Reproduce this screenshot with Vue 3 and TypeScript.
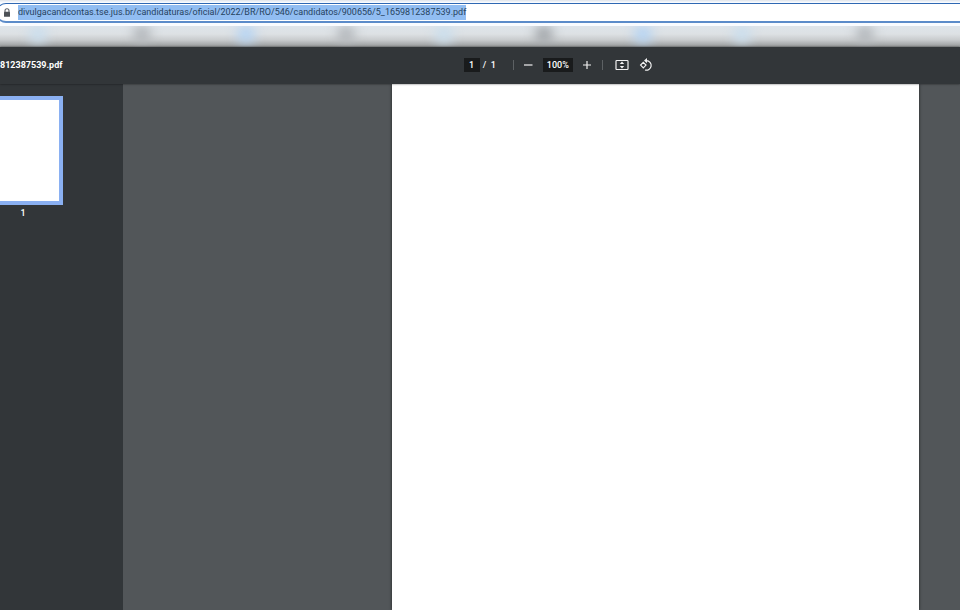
<script setup lang="ts">
import { onMounted, ref } from 'vue'

interface Bookmark {
  tone: 'grey' | 'blue' | 'cyan' | 'dark'
  left: number
}

const url = ref('divulgacandcontas.tse.jus.br/candidaturas/oficial/2022/BR/RO/546/candidatos/900656/5_1659812387539.pdf')
const fileName = '812387539.pdf'
const page = ref('1')
const zoom = ref('100%')
const address = ref<HTMLInputElement | null>(null)

// Horizontal centres of the blurred bookmarks, in percent of the bar.
const bookmarks: Bookmark[] = [
  { tone: 'cyan', left: 4 },
  { tone: 'grey', left: 14.8 },
  { tone: 'blue', left: 25.6 },
  { tone: 'grey', left: 36 },
  { tone: 'cyan', left: 46.3 },
  { tone: 'dark', left: 56.7 },
  { tone: 'blue', left: 67 },
  { tone: 'cyan', left: 77.3 },
  { tone: 'grey', left: 90.1 },
]

onMounted(() => {
  address.value?.focus({ preventScroll: true })
  address.value?.select()
})
</script>

<template>
  <div class="browser">
    <header class="location">
      <div class="omnibox">
        <svg class="lock" viewBox="0 0 8 10" aria-hidden="true">
          <path d="M2 4V2.8a2 2 0 0 1 4 0V4" fill="none" stroke="#5f6368" stroke-width="1.1" />
          <rect x="1" y="3.8" width="6" height="5" rx="0.6" fill="#4d5156" />
        </svg>
        <input ref="address" v-model="url" class="address" type="text" aria-label="URL" spellcheck="false" />
      </div>
    </header>

    <div class="bookmarks">
      <span
        v-for="mark in bookmarks"
        :key="mark.left"
        class="bookmark"
        :class="mark.tone"
        :style="{ left: mark.left + '%' }"
      ></span>
    </div>

    <div class="toolbar">
      <div class="title">{{ fileName }}</div>
      <div class="controls">
        <input v-model="page" class="field page-field" type="text" aria-label="Page" />
        <span class="total">/&nbsp; 1</span>
        <span class="divider first"></span>
        <button class="tool" type="button" aria-label="Zoom out">
          <svg viewBox="0 0 14 14"><path d="M3 7h8.500" /></svg>
        </button>
        <input v-model="zoom" class="field zoom-field" type="text" aria-label="Zoom" />
        <button class="tool" type="button" aria-label="Zoom in">
          <svg viewBox="0 0 14 14"><path d="M3 7h8M7 3v8" /></svg>
        </button>
        <span class="divider"></span>
        <button class="tool fit" type="button" aria-label="Fit to page">
          <svg viewBox="0 0 14 14">
            <rect x="1" y="2.500" width="12" height="9" rx="0.800" />
            <path class="solid" d="M7 3.500L9.200 6H4.800ZM7 10.500L4.800 8H9.200Z" />
          </svg>
        </button>
        <button class="tool" type="button" aria-label="Rotate counterclockwise">
          <svg viewBox="0 0 14 14">
            <path d="M4.300 4.400L7 7.100L4.300 9.800L1.600 7.100Z" />
            <path d="M6 2.600H7.500A4.800 4.800 0 1 1 6 12" />
            <path class="solid" d="M8 0V5.200L5 2.600Z" />
          </svg>
        </button>
      </div>
    </div>

    <main class="viewer">
      <aside class="sidebar">
        <button class="thumbnail" type="button" aria-label="Page 1"></button>
        <span class="thumb-label">1</span>
      </aside>
      <section class="canvas">
        <div class="sheet"></div>
      </section>
    </main>
  </div>
</template>

<style>
body {
  margin: 0;
  background: #525659;
}
</style>

<style scoped>
.browser {
  display: flex;
  flex-direction: column;
  min-height: 100vh;
  overflow: clip;
  font-family: Roboto, "Liberation Sans", sans-serif;
  color: #fff;
}

.location {
  box-sizing: border-box;
  height: 26px;
  padding-top: 3px;
  background: linear-gradient(#e4e8ee 0, #e4e8ee 1px, #f8fbff 2px);
}

.omnibox {
  display: flex;
  align-items: center;
  box-sizing: border-box;
  height: 20px;
  margin-left: -4px;
  padding-left: 6px;
  border: 1px solid #2f68b3;
  border-right: 0;
  border-bottom: 2px solid #5b8bc9;
  border-radius: 10px 0 0 10px;
  background: #fff;
}

.lock {
  width: 8px;
  height: 10px;
  margin-right: 7px;
}

.address {
  flex: 1;
  min-width: 0;
  height: 15px;
  padding: 0;
  border: 0;
  outline: 0;
  background: transparent;
  color: #27435f;
  font: 9px/15px Roboto, "Noto Sans", sans-serif;
}

.address::selection {
  background: #91bdf2;
  color: #27435f;
}

.bookmarks {
  position: relative;
  height: 21px;
  overflow: hidden;
  background: linear-gradient(#dee4ea 0, #dde1e4 8px, #c8cbcd 14px, #959899 21px);
}

.bookmark {
  position: absolute;
  top: 0;
  width: 18px;
  height: 17px;
  margin-left: -9px;
  border-radius: 8px;
  filter: blur(6px);
}

.grey {
  background: #b0b4b8;
}

.dark {
  background: #9ea2a6;
}

.blue {
  background: #b3d3f4;
}

.cyan {
  background: #c9deee;
}

.toolbar {
  position: relative;
  z-index: 1;
  display: flex;
  align-items: center;
  box-sizing: border-box;
  height: 37px;
  padding-bottom: 2px;
  background: #323639;
  box-shadow: 0 0 2px rgba(0, 0, 0, 0.6);
}

.title {
  flex: 0 0 48.3%;
  font-size: 9px;
  font-weight: 700;
}

.controls {
  display: flex;
  align-items: center;
  font-size: 9px;
}

.field {
  box-sizing: border-box;
  height: 14px;
  padding: 0;
  border: 0;
  background: #191b1c;
  color: #fff;
  font: 500 9px/14px Roboto, sans-serif;
  text-align: center;
}

.page-field {
  width: 16px;
}

.zoom-field {
  width: 30px;
  margin: 0 7px 0 8px;
}

.total {
  margin-left: 3px;
  font-weight: 500;
}

.divider {
  width: 1px;
  height: 10px;
  margin: 0 12px 0 8px;
  background: #5d6164;
}

.divider.first {
  margin: 0 7px 0 17px;
}

.tool {
  width: 14px;
  height: 14px;
  padding: 0;
  border: 0;
  background: none;
}

.tool.fit {
  margin-right: 10px;
}

.tool svg {
  display: block;
  fill: none;
  stroke: #f1f1f1;
  stroke-width: 1.2;
}

.tool .solid {
  fill: #f1f1f1;
  stroke: none;
}

.viewer {
  display: flex;
  flex: 1;
}

.sidebar {
  display: flex;
  flex: 0 0 123px;
  flex-direction: column;
  align-items: flex-start;
  box-sizing: border-box;
  padding-top: 12px;
  background: #323639;
}

.thumbnail {
  box-sizing: border-box;
  width: 80px;
  height: 109px;
  margin-left: -17px;
  border: 4px solid #8ab0f2;
  background: #fff;
}

.thumb-label {
  width: 46px;
  margin-top: 2px;
  font-size: 9px;
  font-weight: 500;
  line-height: 12px;
  text-align: center;
}

.canvas {
  display: grid;
  flex: 1;
  grid-template-columns: 269fr 527fr 41fr;
  background: #525659;
}

.sheet {
  grid-column: 2;
  background: #fff;
  box-shadow: 0 0 3px rgba(0, 0, 0, 0.6);
}
</style>
